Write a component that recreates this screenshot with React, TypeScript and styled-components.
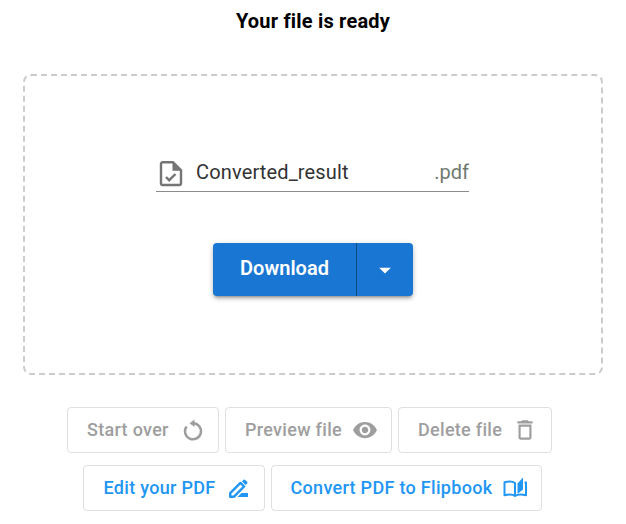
import styled, { createGlobalStyle } from "styled-components";
import { MdVisibility, MdOutlineDelete, MdArrowDropDown } from "react-icons/md";

const Global = createGlobalStyle`
  html, body { margin: 0; padding: 0; background: #fff; }
  body { font-family: Roboto, "Liberation Sans", sans-serif; }
`;

const Page = styled.div`
  width: 626px;
  height: 524px;
  box-sizing: border-box;
  padding-top: 10px;
  display: flex;
  flex-direction: column;
  align-items: center;
`;

const Title = styled.h1`
  margin: 0 0 41px;
  font-size: 20px;
  line-height: 23px;
  font-weight: 700;
  letter-spacing: 0.2px;
  color: #000;
`;

const DropZone = styled.div`
  width: 580px;
  height: 301px;
  box-sizing: border-box;
  border: 2px dashed #ccc;
  border-radius: 8px;
  display: flex;
  flex-direction: column;
  align-items: center;
  padding-top: 80px;
  margin-bottom: 32px;
`;

const NameField = styled.div`
  width: 313px;
  height: 36px;
  box-sizing: border-box;
  border-bottom: 1px solid #8c8c8c;
  display: flex;
  align-items: center;
  color: #757575;
  margin: 0 1px 51px 0;
  padding: 0 0 3px 2px;
`;

const FileIcon = styled.svg`
  margin-top: 4px;
  flex-shrink: 0;
`;

const FileName = styled.span`
  flex: 1;
  margin-left: 12px;
  font-size: 20px;
  letter-spacing: 0.15px;
  color: #333;
`;

const Extension = styled.span`
  font-size: 20px;
  color: #6f7a70;
`;

const SplitButton = styled.div`
  width: 200px;
  height: 53px;
  display: flex;
  background: #1976d2;
  color: #fff;
  border-radius: 4px;
  box-shadow: 0 3px 3px -2px rgba(0,0,0,.3), 0 3px 4px 0 rgba(0,0,0,.16), 0 1px 6px 0 rgba(0,0,0,.12);
`;

const MainAction = styled.div`
  width: 143px;
  border-right: 1px solid #0d4a80;
  display: flex;
  align-items: center;
  justify-content: center;
  padding-bottom: 3px;
  font-size: 20px;
  font-weight: 600;
`;

const Caret = styled.div`
  flex: 1;
  display: flex;
  align-items: center;
  justify-content: center;
`;

const ButtonRow = styled.div<{ $shift: number; $mb?: number }>`
  display: flex;
  gap: 6px;
  margin: 0 ${(p) => p.$shift}px ${(p) => p.$mb ?? 0}px 0;
`;

const ActionButton = styled.div<{ $width: number; $active?: boolean; $inset?: number }>`
  width: ${(p) => p.$width}px;
  height: 46px;
  box-sizing: border-box;
  border: 1px solid #e0e0e0;
  border-radius: 4px;
  padding: 0 0 1px ${(p) => p.$inset ?? 19}px;
  display: flex;
  align-items: center;
  gap: 10px;
  font-size: 18px;
  font-weight: 500;
  letter-spacing: 0.3px;
  color: ${(p) => (p.$active ? "#2196f3" : "#9e9e9e")};

  svg {
    flex-shrink: 0;
  }
`;

const ReplayIcon = () => (
  <svg width="24" height="24" viewBox="-2 -1 24 24">
    <path d="M12 4.300a8 8 0 1 1-6.400 3.200" fill="none" stroke="currentColor" strokeWidth="2.500" />
    <path d="M13.500 0.500v7.500L8.500 4.300z" fill="currentColor" />
  </svg>
);

const PencilIcon = () => (
  <svg width="24" height="22" viewBox="-2 -1 24 22">
    <path d="M2.200 18.800v-3.600L12.500 4.900l3.600 3.600L5.800 18.800z" fill="none" stroke="currentColor" strokeWidth="2.400" strokeLinejoin="round" />
    <path d="M14 3.400l1.600-1.600a1 1 0 0 1 1.400 0l2.200 2.200a1 1 0 0 1 0 1.400L17.600 7z" fill="currentColor" />
    <path d="M13.500 15H20v4H9.500z" fill="currentColor" />
  </svg>
);

const BookIcon = () => (
  <svg width="25" height="24" viewBox="-1 0 25 24">
    <path d="M12 20c-2-1.500-6-1.800-10.500-.8V6.200c4.500-1 8.500-.7 10.500.8v13c2-1.500 6.500-1.800 11-.8V6.500h-1.500" fill="none" stroke="currentColor" strokeWidth="2" strokeLinejoin="round" />
    <path d="M14.500 7.500L20 1.500V13.500l-5.500 4.500z" fill="currentColor" />
  </svg>
);

export default function App() {
  return (
    <Page>
      <Global />
      <Title>Your file is ready</Title>
      <DropZone>
        <NameField>
          <FileIcon width="26" height="28" viewBox="0 0 26 28">
            <path d="M4.500 2.300H15L23 10.300V23.500a1.500 1.500 0 0 1-1.500 1.500H4.500A1.500 1.500 0 0 1 3 23.500V3.800a1.500 1.500 0 0 1 1.500-1.500z" fill="none" stroke="currentColor" strokeWidth="2.400" />
            <path d="M14.500 2.500L22.800 10.800H14.500z" fill="currentColor" />
            <path d="M8 17l3.200 3.200L17.500 14" fill="none" stroke="currentColor" strokeWidth="2.400" />
          </FileIcon>
          <FileName>Converted_result</FileName>
          <Extension>.pdf</Extension>
        </NameField>
        <SplitButton>
          <MainAction>Download</MainAction>
          <Caret>
            <MdArrowDropDown size={28} />
          </Caret>
        </SplitButton>
      </DropZone>
      <ButtonRow $shift={7} $mb={12}>
        <ActionButton $width={152}>Start over <ReplayIcon /></ActionButton>
        <ActionButton $width={167}>Preview file <MdVisibility size={26} /></ActionButton>
        <ActionButton $width={154}>Delete file <MdOutlineDelete size={26} /></ActionButton>
      </ButtonRow>
      <ButtonRow $shift={2}>
        <ActionButton $width={182} $active $inset={20}>Edit your PDF <PencilIcon /></ActionButton>
        <ActionButton $width={271} $active>Convert PDF to Flipbook <BookIcon /></ActionButton>
      </ButtonRow>
    </Page>
  );
}
